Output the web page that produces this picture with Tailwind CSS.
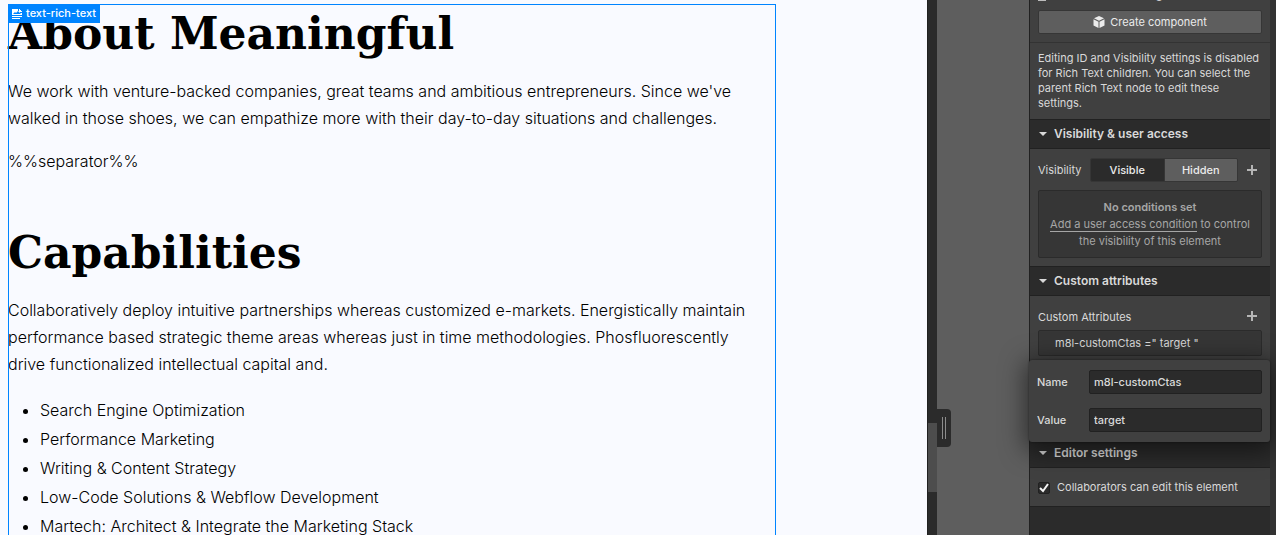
<!DOCTYPE html>
<html lang="en">
<head>
<meta charset="utf-8">
<title>Designer</title>
<script src="https://cdn.jsdelivr.net/npm/@tailwindcss/browser@4"></script>
</head>
<body class="flex h-screen overflow-hidden bg-[#5e5e5e] font-['Inter',sans-serif]">
  <main class="min-w-0 flex-1 overflow-hidden bg-[#f9faff] pt-1 pl-2 text-black">
    <article class="relative max-w-[768px] pb-6 outline outline-1 -outline-offset-1 outline-[#0084ff]">
      <div class="absolute top-0 left-0 flex h-[19px] items-center gap-1 bg-[#0084ff] px-1 text-[11px] font-medium text-white">
        <svg class="size-[10px]" viewBox="0 0 10 10" fill="#fff"><path d="M0 0h6v2h2v2h2v2H0zM0 7h10v1H0zM0 9h8v1H0z"/><path d="M1 5l2-2 1 1 2-2 3 3z" fill="#0084ff"/><path d="M7 0h1v1h1v1h1v1H8V2H7z"/></svg>
        text-rich-text
      </div>
      <h1 class="pt-1 font-['DejaVu_Serif',serif] text-[44px] leading-[52px] font-bold whitespace-nowrap">About Meaningful</h1>
      <p class="mt-[18px] pr-2 font-light leading-[27px]">We work with venture-backed companies, great teams and ambitious entrepreneurs. Since we've walked in those shoes, we can empathize more with their day-to-day situations and challenges.</p>
      <p class="mt-4 font-light leading-[27px]">%%separator%%</p>
      <h2 class="mt-[52px] font-['DejaVu_Serif',serif] text-[44px] leading-[52px] font-bold">Capabilities</h2>
      <p class="mt-[18px] pr-2 font-light leading-[27px]">Collaboratively deploy intuitive partnerships whereas customized e-markets. Energistically maintain performance based strategic theme areas whereas just in time methodologies. Phosfluorescently drive functionalized intellectual capital and.</p>
      <ul class="mt-[18px] list-disc pl-8 font-light leading-[29px]">
        <li>Search Engine Optimization</li>
        <li>Performance Marketing</li>
        <li>Writing &amp; Content Strategy</li>
        <li>Low-Code Solutions &amp; Webflow Development</li>
        <li>Martech: Architect &amp; Integrate the Marketing Stack</li>
      </ul>
    </article>
  </main>

  <div class="relative w-[102px] shrink-0">
    <div class="h-full w-[10px] border-l border-[#212121] bg-[#2b2b2b] pt-[423px]"><div class="h-[69px] bg-[#4d4d4d]"></div></div>
    <button aria-label="Resize canvas" class="absolute top-[409px] left-[10px] flex h-[38px] w-[14px] items-center justify-center gap-[2px] rounded-r bg-[#2b2b2b]"><span class="h-[22px] w-px bg-[#8c8c8c]"></span><span class="h-[22px] w-px bg-[#8c8c8c]"></span></button>
  </div>

  <aside class="flex w-[247px] shrink-0 border-l border-[#212121] bg-[#333]">
    <div class="flex w-60 flex-col bg-[#2b2b2b] text-[11px] leading-[15px] text-[#d9d9d9]">
      <section class="border-b border-[#333] bg-[#404040] px-2 pb-2">
        <div class="-mt-3 flex h-[15px] items-center gap-2 font-medium"><span class="mb-[2px] h-2 w-2 self-end bg-[#bdbdbd]"></span>text-rich-text settings</div>
        <button class="mt-[7px] flex h-6 w-full items-center justify-center gap-[5px] rounded-[2px] border border-[#363636] bg-[#5e5e5e] text-[#ebebeb]">
          <svg class="size-3" viewBox="0 0 12 12" fill="#ebebeb"><path d="M6 0l5 2.300L6 4.700 1 2.300zM.5 3.300l5 2.400V12l-5-2.500zM11.500 3.300l-5 2.400V12l5-2.500z"/></svg>Create component
        </button>
      </section>
      <p class="bg-[#404040] px-2 pt-2 pb-2">Editing ID and Visibility settings is disabled for Rich Text children. You can select the parent Rich Text node to edit these settings.</p>
      <h3 class="flex h-[30px] items-center gap-[7px] border-y border-[#212121] bg-[#2b2b2b] pb-px pl-[9px] text-xs font-semibold"><svg class="h-1 w-2" viewBox="0 0 8 4" fill="#d9d9d9"><path d="M0 0h8L4 4z"/></svg>Visibility &amp; user access</h3>
      <section class="bg-[#404040] px-2 pt-[9px] pb-2">
        <div class="flex h-6 items-center">
          <span class="w-[52px]">Visibility</span>
          <div class="flex h-6 w-[148px] overflow-hidden rounded-[2px] border border-[#363636] font-medium text-[#ebebeb]"><button class="flex-1 border-r border-[#363636] bg-[#2b2b2b]">Visible</button><button class="flex-1 bg-[#5e5e5e]">Hidden</button></div>
          <button aria-label="Add condition" class="ml-auto mr-1"><svg class="size-3" viewBox="0 0 12 12" stroke="#b5b5b5" stroke-width="2"><path d="M6 1v10M1 6h10"/></svg></button>
        </div>
        <div class="mt-2 rounded-[2px] border border-[#2b2b2b] bg-[#363636] px-2 pt-2 pb-[7px] text-center leading-[17px] text-[#a6a6a6]">
          <div class="font-semibold">No conditions set</div>
          <a href="#" class="border-b border-[#a6a6a6]">Add a user access condition</a> to control the visibility of this element
        </div>
      </section>
      <h3 class="flex h-[30px] items-center gap-[7px] border-y border-[#212121] bg-[#2b2b2b] pb-px pl-[9px] text-xs font-semibold"><svg class="h-1 w-2" viewBox="0 0 8 4" fill="#d9d9d9"><path d="M0 0h8L4 4z"/></svg>Custom attributes</h3>
      <section class="relative h-[142px] bg-[#404040] px-2 pt-[14px]">
        <div class="flex h-[15px] items-center justify-between">Custom Attributes<button aria-label="Add attribute" class="mr-1 mb-1"><svg class="size-3" viewBox="0 0 12 12" stroke="#b5b5b5" stroke-width="2"><path d="M6 1v10M1 6h10"/></svg></button></div>
        <div class="mt-[5px] flex h-[26px] items-center rounded-[2px] border border-[#2b2b2b] bg-[#363636] pl-4">m8l-customCtas =" target "</div>
        <form class="absolute top-[64px] -left-px z-10 grid w-[241px] grid-cols-[52px_1fr] items-center gap-y-[14px] rounded-[3px] bg-[#404040] py-[10px] pr-2 pl-2 font-medium text-[#d9d9d9] shadow-[0_5px_24px_4px_rgba(0,0,0,0.5),0_0_2px_rgba(0,0,0,0.5)]">
          <label for="n">Name</label><input id="n" value="m8l-customCtas" class="h-6 w-full rounded-[2px] border border-[#212121] bg-[#2b2b2b] px-1">
          <label for="v">Value</label><input id="v" value="target" class="h-6 w-full rounded-[2px] border border-[#212121] bg-[#2b2b2b] px-1">
        </form>
      </section>
      <h3 class="flex h-[30px] items-center gap-[7px] border-y border-[#212121] bg-[#2b2b2b] pb-px pl-[9px] text-xs font-semibold"><svg class="h-1 w-2" viewBox="0 0 8 4" fill="#d9d9d9"><path d="M0 0h8L4 4z"/></svg>Editor settings</h3>
      <label class="flex h-[39px] items-center border-b border-[#212121] bg-[#404040] pt-px pl-2">
        <span class="grid size-3 place-items-center"><input type="checkbox" checked class="col-start-1 row-start-1 size-3 appearance-none rounded-[2px] border border-[#212121] bg-[#2b2b2b]"><svg class="pointer-events-none col-start-1 row-start-1 size-[10px]" viewBox="0 0 10 10" fill="none" stroke="#f5f5f5" stroke-width="2"><path d="M1 5l3 3 5-7"/></svg></span>
        <span class="ml-[7px]">Collaborators can edit this element</span>
      </label>
    </div>
  </aside>
</body>
</html>
